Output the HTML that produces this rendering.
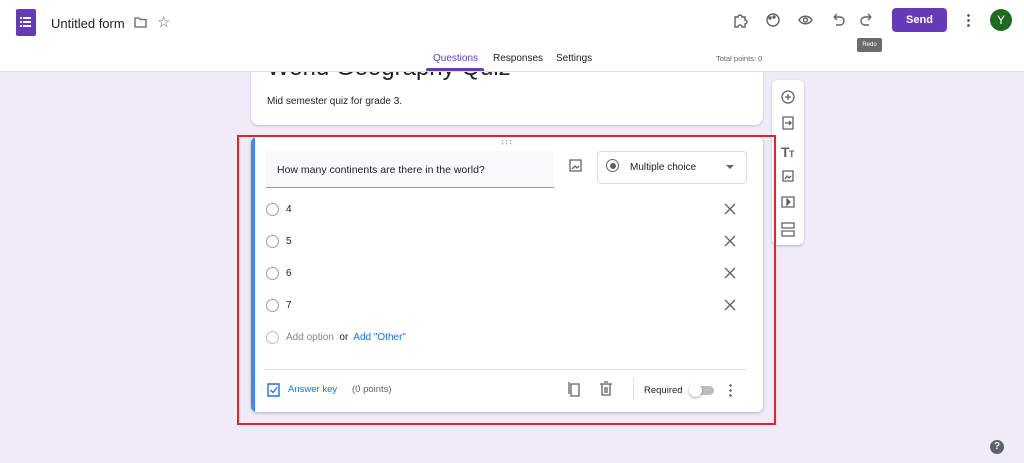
<!DOCTYPE html><html><head><style>
body{margin:0;width:1024px;height:463px;background:#f0ebf8;font-family:"Liberation Sans",sans-serif;position:relative;overflow:hidden;color:#202124}
.a{position:absolute}
svg{position:absolute}
</style></head><body>
<div class="a" style="left:251px;top:40px;width:512px;height:85px;background:#fff;border-radius:8px;box-shadow:0 1px 2px rgba(0,0,0,.2)"></div>
<div class="a" style="left:267px;top:54px;font-size:24px;color:#202124">World Geography Quiz</div>
<div class="a" style="left:267px;top:96px;font-size:10px;color:#202124">Mid semester quiz for grade 3.</div>
<div class="a" style="left:0;top:0;width:1024px;height:71px;background:#fff;border-bottom:1px solid #e0e0e0"></div>
<div class="a" style="left:16px;top:9px;width:20px;height:27px;background:#673ab7;border-radius:2px"></div>
<svg style="left:20px;top:16px" width="12" height="12" fill="#fff"><rect x="0" y="1" width="2" height="2"/><rect x="0" y="5" width="2" height="2"/><rect x="0" y="9" width="2" height="2"/><rect x="3" y="1" width="8" height="2"/><rect x="3" y="5" width="8" height="2"/><rect x="3" y="9" width="8" height="2"/></svg>
<div class="a" style="left:51px;top:16px;font-size:13px">Untitled form</div>
<svg style="left:134px;top:17px" width="13" height="11"><path d="M1 1h4l1 1.5h6v7.5H1z" fill="none" stroke="#5f6368" stroke-width="1.3"/></svg>
<div class="a" style="left:157px;top:13px;font-size:15px;color:#5f6368">☆</div>
<svg style="left:733px;top:12px" width="140" height="16" fill="none" stroke="#5f6368" stroke-width="1.4">
<path d="M2 5h3a2 2 0 014 0h3v3a2 2 0 010 4v3H9a2 2 0 00-4 0H2z"/>
<circle cx="40" cy="8" r="6"/><circle cx="37" cy="6" r="1" fill="#5f6368"/><circle cx="41" cy="5" r="1" fill="#5f6368"/>
<path d="M66 8c3-5 10-5 13 0c-3 5-10 5-13 0z"/><circle cx="72.5" cy="8" r="2"/>
<path d="M101 5h6a4 4 0 010 8h-4M101 5l3-3M101 5l3 3"/>
<path d="M138 5h-6a4 4 0 000 8h4M138 5l-3-3M138 5l-3 3"/>
</svg>
<div class="a" style="left:892px;top:8px;width:55px;height:24px;background:#673ab7;border-radius:4px;color:#fff;font-size:11px;font-weight:bold;text-align:center;line-height:24px">Send</div>
<div class="a" style="left:967px;top:13px;width:3px;height:14px;background:radial-gradient(circle,#5f6368 1.3px,transparent 1.5px) 0 0/3px 5px"></div>
<div class="a" style="left:990px;top:9px;width:22px;height:22px;border-radius:50%;background:#1e6b1e;color:#fff;font-size:12px;text-align:center;line-height:22px">Y</div>
<div class="a" style="left:857px;top:38px;width:25px;height:14px;background:#6b6b6b;color:#fff;font-size:6px;text-align:center;line-height:14px;border-radius:2px">Redo</div>
<div class="a" style="left:433px;top:53px;font-size:10px;color:#673ab7">Questions</div>
<div class="a" style="left:426px;top:68px;width:58px;height:3px;background:#673ab7;border-radius:2px 2px 0 0"></div>
<div class="a" style="left:493px;top:53px;font-size:10px">Responses</div>
<div class="a" style="left:556px;top:53px;font-size:10px">Settings</div>
<div class="a" style="left:716px;top:54px;font-size:7.5px;color:#5f6368">Total points: 0</div>
<div class="a" style="left:772px;top:80px;width:32px;height:165px;background:#fff;border-radius:6px;box-shadow:0 1px 2px rgba(0,0,0,.25)"></div>
<svg style="left:780px;top:89px" width="16" height="150" fill="none" stroke="#5f6368" stroke-width="1.3">
<circle cx="8" cy="8" r="6"/><path d="M8 5v6M5 8h6"/>
<path d="M3 28h10v12H3z M5 34h6M9 32l2 2-2 2"/>
<text x="1" y="68" font-size="14" font-weight="bold" fill="#5f6368" stroke="none" font-family="Liberation Sans">T</text><text x="9" y="68" font-size="9" font-weight="bold" fill="#5f6368" stroke="none" font-family="Liberation Sans">T</text>
<path d="M3 82h10v10H3z M5 90l2-3 2 2 2-2"/>
<path d="M2 108h12v10H2z"/><path d="M7 110v6l3-3z" fill="#5f6368"/>
<path d="M2 134h12v5H2zM2 142h12v5H2z"/>
</svg>
<div class="a" style="left:251px;top:137px;width:512px;height:275px;background:#fff;border-radius:6px;box-shadow:0 1px 3px rgba(0,0,0,.25);overflow:hidden"><div style="width:4px;height:100%;background:#4285f4"></div></div>
<div class="a" style="left:237px;top:135px;width:535px;height:286px;border:2px solid #e3222e"></div>
<svg style="left:502px;top:140px" width="10" height="5" fill="#9aa0a6"><rect x="0" y="0" width="1.3" height="1.3"/><rect x="4" y="0" width="1.3" height="1.3"/><rect x="8" y="0" width="1.3" height="1.3"/><rect x="0" y="3" width="1.3" height="1.3"/><rect x="4" y="3" width="1.3" height="1.3"/><rect x="8" y="3" width="1.3" height="1.3"/></svg>
<div class="a" style="left:266px;top:151px;width:288px;height:36px;background:#f8f9fa;border-bottom:1px solid #999"></div>
<div class="a" style="left:277px;top:164px;font-size:10.5px">How many continents are there in the world?</div>
<svg style="left:569px;top:159px" width="14" height="14" fill="none" stroke="#5f6368" stroke-width="1.3"><path d="M1 1h11v11H1z M3 10l3-3 2 2 2-2"/></svg>
<div class="a" style="left:597px;top:151px;width:148px;height:31px;border:1px solid #dadce0;border-radius:4px"></div>
<div class="a" style="left:606px;top:159px;width:11px;height:11px;border:1.5px solid #5f6368;border-radius:50%"></div>
<div class="a" style="left:610px;top:163px;width:6px;height:6px;background:#5f6368;border-radius:50%;margin:-0.5px 0 0 -0.5px"></div>
<div class="a" style="left:630px;top:162px;font-size:10px">Multiple choice</div>
<div class="a" style="left:726px;top:165px;border:4px solid transparent;border-top-color:#5f6368;border-bottom:0"></div>
<div class="a" style="left:266px;top:203px;width:11px;height:11px;border:1.3px solid #9aa0a6;border-radius:50%"></div>
<div class="a" style="left:286px;top:204px;font-size:10px">4</div>
<div class="a" style="left:266px;top:235px;width:11px;height:11px;border:1.3px solid #9aa0a6;border-radius:50%"></div>
<div class="a" style="left:286px;top:236px;font-size:10px">5</div>
<div class="a" style="left:266px;top:267px;width:11px;height:11px;border:1.3px solid #9aa0a6;border-radius:50%"></div>
<div class="a" style="left:286px;top:268px;font-size:10px">6</div>
<div class="a" style="left:266px;top:299px;width:11px;height:11px;border:1.3px solid #9aa0a6;border-radius:50%"></div>
<div class="a" style="left:286px;top:300px;font-size:10px">7</div>
<svg style="left:724px;top:203px" width="12" height="108" stroke="#5f6368" stroke-width="1.4"><path d="M1 1l10 10M11 1L1 11M1 33l10 10M11 33L1 43M1 65l10 10M11 65L1 75M1 97l10 10M11 97L1 107"/></svg>
<div class="a" style="left:266px;top:331px;width:11px;height:11px;border:1.3px solid #bdbdbd;border-radius:50%"></div>
<div class="a" style="left:286px;top:332px;font-size:10px;color:#80868b">Add option <span style="color:#202124">&nbsp;or&nbsp;</span> <span style="color:#1a73e8">Add "Other"</span></div>
<div class="a" style="left:264px;top:369px;width:482px;height:1px;background:#e0e0e0"></div>
<svg style="left:267px;top:382px" width="13" height="15" fill="none" stroke="#1a73e8" stroke-width="1.4"><path d="M1 2h11v12H1z M3.5 8l2.5 2.5 4-5"/></svg>
<div class="a" style="left:288px;top:384px;font-size:9.5px;color:#1a73e8">Answer key</div>
<div class="a" style="left:352px;top:384px;font-size:9.5px;color:#5f6368">(0 points)</div>
<svg style="left:567px;top:381px" width="48" height="16" fill="none" stroke="#5f6368" stroke-width="1.3"><path d="M4 3h8v12H4z M2 1v12"/><path d="M33 3h12M35 3v11h8V3M37 1h4M38 6v6M40 6v6"/></svg>
<div class="a" style="left:633px;top:378px;width:1px;height:22px;background:#e0e0e0"></div>
<div class="a" style="left:644px;top:385px;font-size:9.5px">Required</div>
<div class="a" style="left:692px;top:386px;width:22px;height:9px;background:#bdbdbd;border-radius:5px"></div>
<div class="a" style="left:689px;top:384px;width:13px;height:13px;background:#fff;border-radius:50%;box-shadow:0 1px 2px rgba(0,0,0,.4)"></div>
<div class="a" style="left:729px;top:383px;width:3px;height:14px;background:radial-gradient(circle,#5f6368 1.2px,transparent 1.4px) 0 0/3px 5px"></div>
<div class="a" style="left:990px;top:440px;width:14px;height:14px;border-radius:50%;background:#5f6368;color:#fff;font-size:10px;font-weight:bold;text-align:center;line-height:14px">?</div>
</body></html>
